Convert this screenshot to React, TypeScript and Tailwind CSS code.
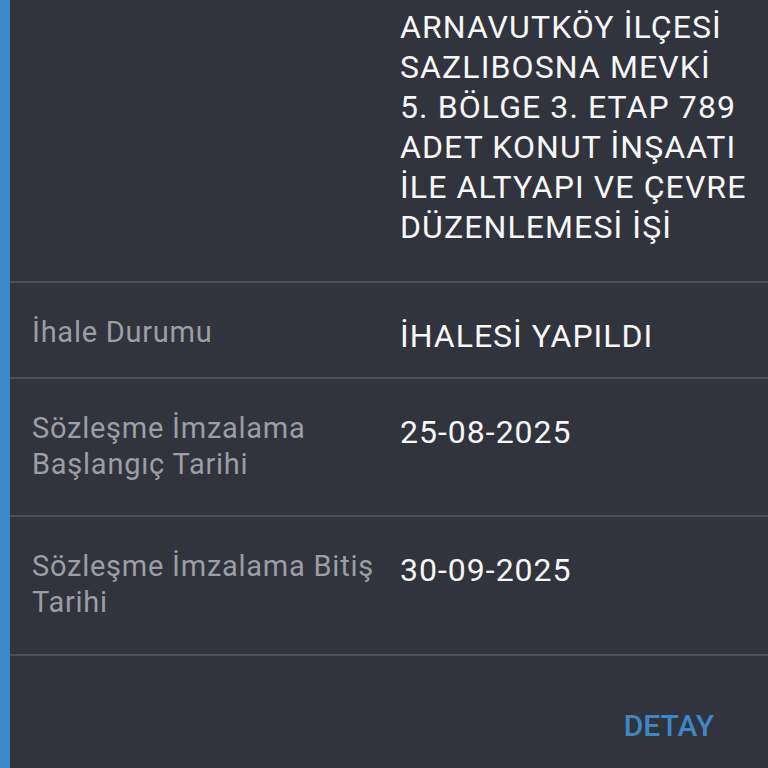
import React from 'react';

const rows = [
  { label: 'İhale Durumu', value: 'İHALESİ YAPILDI', pb: 'pb-[21px]' },
  { label: 'Sözleşme İmzalama Başlangıç Tarihi', value: '25-08-2025', pb: 'pb-[33px]' },
  { label: 'Sözleşme İmzalama Bitiş Tarihi', value: '30-09-2025', pb: 'pb-[34px]' },
];

const titleLines = [
  'ARNAVUTKÖY İLÇESİ',
  'SAZLIBOSNA MEVKİ',
  '5. BÖLGE 3. ETAP 789',
  'ADET KONUT İNŞAATI',
  'İLE ALTYAPI VE ÇEVRE',
  'DÜZENLEMESİ İŞİ',
];

export default function App() {
  return (
    <div className="h-[768px] w-[768px] overflow-hidden bg-[#31343c] font-['Roboto',sans-serif]">
      <div className="flex h-full border-l-[10px] border-[#3d86c8]">
        <div className="flex flex-1 flex-col">
          {/* ihale adı (üstü kesik) */}
          <div className="flex pt-[7px] pb-[34px]">
            <div className="w-[390px] shrink-0" />
            <div className="text-[32px] leading-[40px] tracking-[1.1px] text-[#f7f7f7]">
              {titleLines.map((l) => (
                <div key={l} className="whitespace-nowrap">
                  {l}
                </div>
              ))}
            </div>
          </div>

          {rows.map((r) => (
            <div key={r.value} className={`flex border-t-2 border-[#4c4f56] pt-[31px] ${r.pb}`}>
              <div className="w-[390px] shrink-0 pl-[22px] pr-3 text-[29px] leading-[36px] tracking-[0.75px] text-[#9b9ea4]">
                {r.label}
              </div>
              <div className="pt-[2px] text-[32px] leading-[40px] tracking-[1px] text-[#f7f7f7]">{r.value}</div>
            </div>
          ))}

          <div className="flex flex-1 justify-end border-t-2 border-[#4c4f56] pt-[50px] pr-[54px]">
            <button type="button" className="h-fit text-[30px] font-medium leading-[40px] uppercase text-[#3d86c8]">
              Detay
            </button>
          </div>
        </div>
      </div>
    </div>
  );
}
